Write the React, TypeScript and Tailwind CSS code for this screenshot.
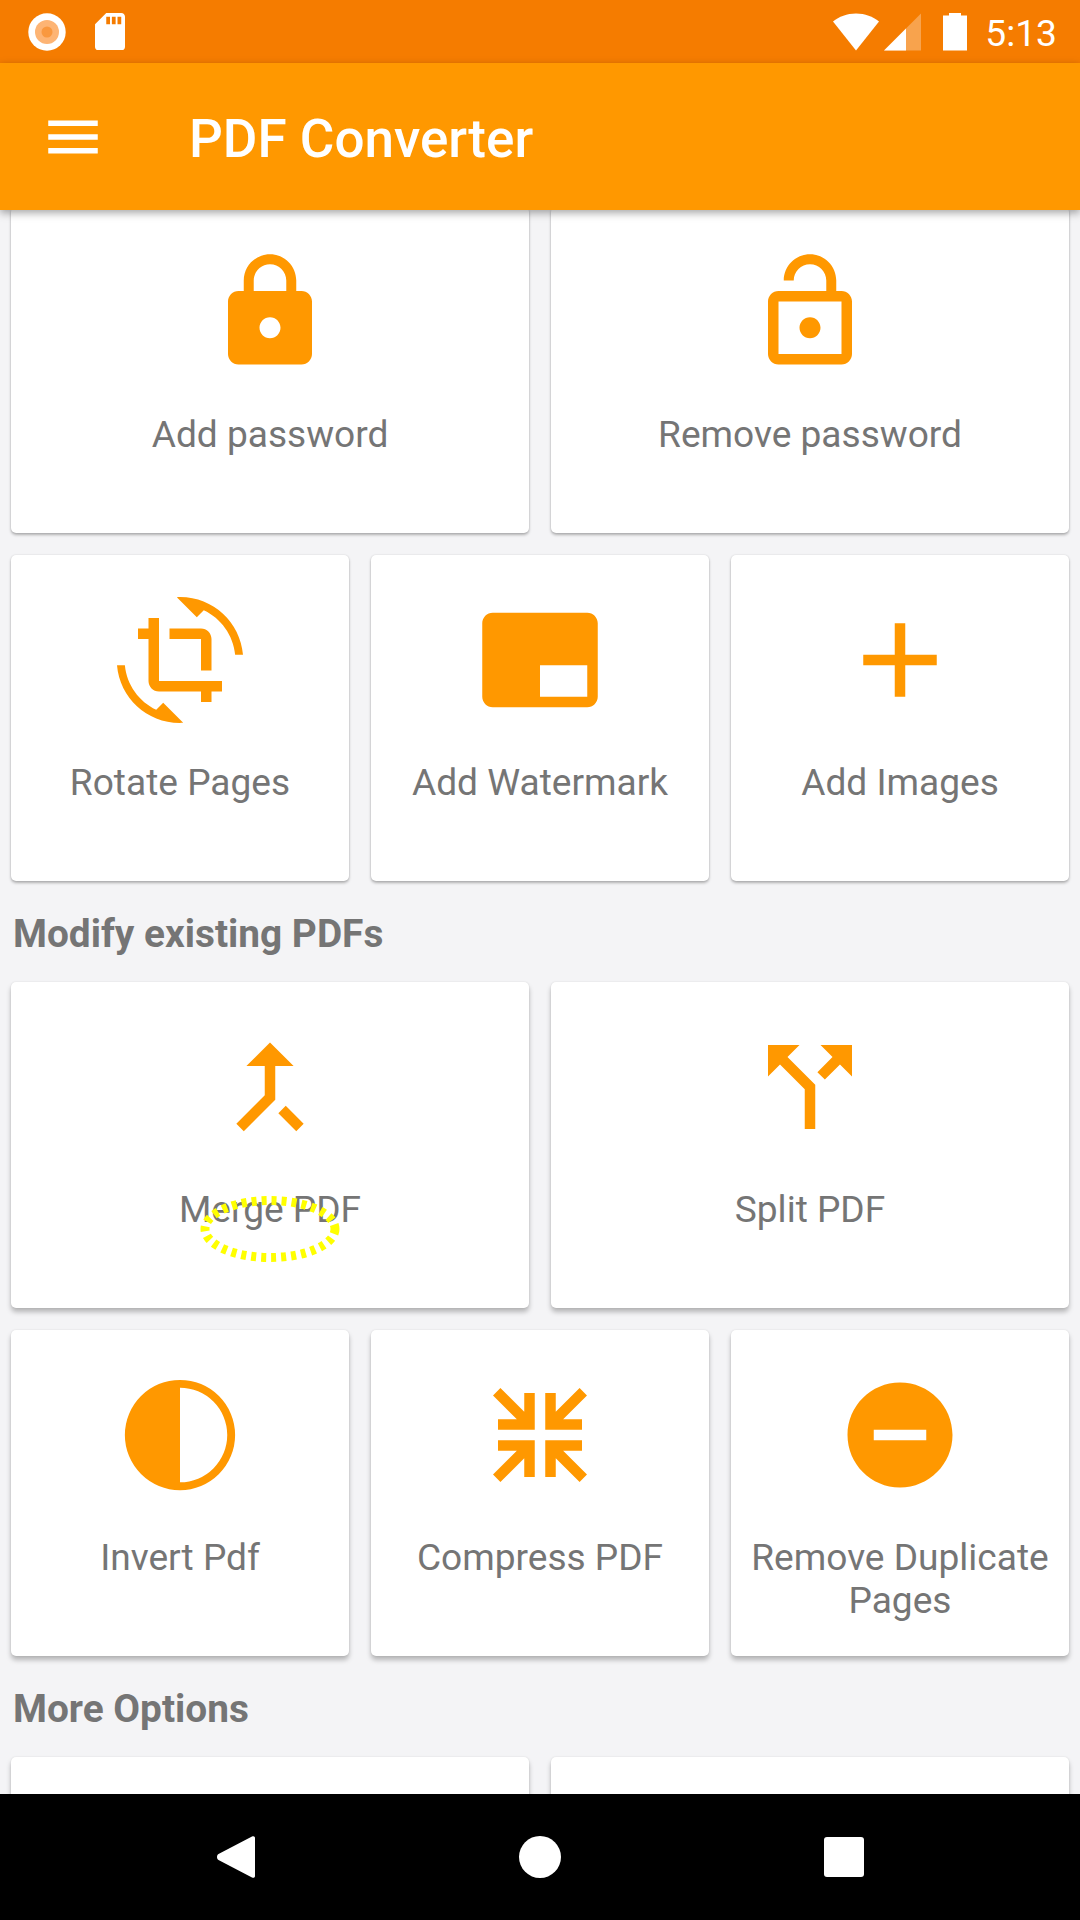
import type { ReactNode } from 'react';

const paths = {
    lock: 'M18 8h-1V6c0-2.76-2.24-5-5-5S7 3.24 7 6v2H6c-1.1 0-2 .9-2 2v10c0 1.1.9 2 2 2h12c1.1 0 2-.9 2-2V10c0-1.1-.9-2-2-2zm-6 9c-1.1 0-2-.9-2-2s.9-2 2-2 2 .9 2 2-.9 2-2 2zm3.1-9H8.9V6c0-1.71 1.39-3.1 3.1-3.1 1.71 0 3.1 1.39 3.1 3.1v2z',
    lockOpen: 'M12 17c1.1 0 2-.9 2-2s-.9-2-2-2-2 .9-2 2 .9 2 2 2zm6-9h-1V6c0-2.76-2.24-5-5-5S7 3.24 7 6h1.9c0-1.71 1.39-3.1 3.1-3.1 1.71 0 3.1 1.39 3.1 3.1v2H6c-1.1 0-2 .9-2 2v10c0 1.1.9 2 2 2h12c1.1 0 2-.9 2-2V10c0-1.1-.9-2-2-2zm0 12H6V10h12v10z',
    rotate: 'M7.47 21.49C4.2 19.93 1.86 16.76 1.5 13H0c.51 6.16 5.66 11 11.95 11 .23 0 .44-.02.66-.03L8.8 20.15l-1.33 1.34zM12.05 0c-.23 0-.44.02-.66.04l3.81 3.81 1.33-1.33C19.8 4.07 22.14 7.24 22.5 11H24c-.51-6.16-5.66-11-11.95-11zM16 14h2V8c0-1.11-.9-2-2-2h-6v2h6v6zm-8 2V4H6v2H4v2h2v8c0 1.1.89 2 2 2h8v2h2v-2h2v-2H8z',
    watermark: 'M21 3H3c-1.1 0-2 .9-2 2v14c0 1.1.9 2 2 2h18c1.1 0 2-.9 2-2V5c0-1.1-.9-2-2-2zM12 13h9v6h-9z',
    add: 'M19 13h-6v6h-2v-6H5v-2h6V5h2v6h6v2z',
    merge: 'M17 20.41L18.41 19 15 15.59 13.59 17 17 20.41zM7.5 8H11v5.59L5.59 19 7 20.41l6-6V8h3.5L12 3.5 7.5 8z',
    split: 'M14 4l2.29 2.29-2.88 2.88 1.42 1.42 2.88-2.88L20 10V4zm-4 0H4v6l2.29-2.29 4.71 4.7V20h2v-8.41l-5.29-5.3z',
    invert: 'M12 1.5a10.5 10.5 0 1 0 0 21 10.5 10.5 0 0 0 0-21zM12 3v18a9 9 0 0 0 0-18z',
    compress: 'M11 11H4V9h3.59L3.05 4.46l1.41-1.41L9 7.59V4h2zM13 11h7V9h-3.59l4.54-4.54-1.41-1.41L15 7.59V4h-2zM11 13H4v2h3.59l-4.54 4.54 1.41 1.41L9 16.41V20h2zM13 13h7v2h-3.59l4.54 4.54-1.41 1.41L15 16.41V20h-2z',
    minus: 'M12 2C6.48 2 2 6.48 2 12s4.48 10 10 10 10-4.48 10-10S17.52 2 12 2zm5 11H7v-2h10v2z',
};

const Card = ({ icon, label, low, children }: { icon?: string; label?: string; low?: boolean; children?: ReactNode }) => (
    <div
        className={`relative h-[326px] rounded-[5px] bg-white px-[10px] pt-[42px] text-center ${
            low
                ? 'shadow-[0_4px_5px_rgba(0,0,0,0.26),0_0_2px_rgba(0,0,0,0.1)]'
                : 'shadow-[0_2px_3px_rgba(0,0,0,0.28),0_0_2px_rgba(0,0,0,0.12)]'
        }`}
    >
        {icon && (
            <svg viewBox="0 0 24 24" className="mx-auto h-[126px] w-[126px] fill-[#ff9800]">
                <path d={icon} fillRule="evenodd" />
            </svg>
        )}
        {label && <div className="mt-[38px] text-[37.1px] leading-[43px] text-[#757575]">{label}</div>}
        {children}
    </div>
);

const SectionTitle = ({ children }: { children: ReactNode }) => (
    <div className="pb-[27px] pl-[2px] pt-[31px] text-[38.8px] font-bold leading-[43px] text-[#757575]">{children}</div>
);

const StatusBar = () => (
    <div className="flex h-[63px] shrink-0 items-center justify-between bg-[#f57c00] pl-[28px] pr-[23px]">
        <div className="flex items-center gap-[29px]">
            <svg viewBox="0 0 38 38" className="h-[38px] w-[38px]">
                <circle cx="19" cy="19" r="18.7" fill="#fff" />
                <circle cx="19" cy="19" r="12" fill="#fdb474" />
                <circle cx="19" cy="19" r="5.5" fill="#f9983f" />
            </svg>
            <svg viewBox="4 2 16 20" className="h-[37.5px] w-[30px] fill-white">
                <path d="M18 2h-8L4.02 8 4 20c0 1.1.9 2 2 2h12c1.1 0 2-.9 2-2V4c0-1.1-.9-2-2-2zm-6 6h-2V4h2v4zm3 0h-2V4h2v4zm3 0h-2V4h2v4z" />
            </svg>
        </div>
        <div className="flex items-center">
            <svg viewBox="0 0 134 38" className="h-[38px] w-[134px]">
                <path d="M0 8.5C6 3.5 14 0.500 23 0.500S40 3.500 46 8.500L23 37.500Z" fill="#fff" />
                <path d="M51 37.500L88 0.500V37.500Z" fill="#fff" fillOpacity="0.3" />
                <path d="M51 37.500L73 15.500V37.500Z" fill="#fff" />
                <path d="M110 37.500V2.500H116V0H128V2.500H134V37.500Z" fill="#fff" />
            </svg>
            <span className="ml-[18px] mt-[3px] text-[37.2px] leading-[43px] text-white">5:13</span>
        </div>
    </div>
);

const Toolbar = () => (
    <div className="relative z-10 flex h-[147px] shrink-0 items-center bg-[#ff9800] pl-[40px] shadow-[0_3px_8px_rgba(0,0,0,0.35)]">
        <svg viewBox="0 0 24 24" className="h-[66px] w-[66px] fill-white">
            <path d="M3 18h18v-2H3v2zm0-5h18v-2H3v2zm0-5h18V6H3v2z" />
        </svg>
        <span className="ml-[83px] mt-[4px] text-[53px] font-medium leading-[62px] text-white">PDF Converter</span>
    </div>
);

const NavBar = () => (
    <div className="relative z-10 flex h-[126px] shrink-0 items-center justify-center bg-black">
        <div className="flex w-[304px] justify-center">
            <svg viewBox="0 0 38 42" className="h-[42px] w-[38px] fill-white">
                <path d="M35 .6C36.500 -.4 38 .3 38 2V40C38 41.700 36.500 42.400 35 41.400L1.500 24C-.5 22.800 -.5 19.200 1.500 18Z" />
            </svg>
        </div>
        <div className="flex w-[304px] justify-center">
            <div className="h-[42px] w-[42px] rounded-full bg-white" />
        </div>
        <div className="flex w-[304px] justify-center">
            <div className="h-[40px] w-[40px] rounded-[3px] bg-white" />
        </div>
    </div>
);

export default function App() {
    return (
        <div className="flex h-[1920px] w-[1080px] flex-col overflow-hidden bg-[#f4f4f6] font-['Roboto',sans-serif]">
            <StatusBar />
            <Toolbar />
            <div className="min-h-0 flex-1 overflow-hidden">
                <div className="-mt-[3px] px-[11px]">
                    <div className="grid grid-cols-2 gap-[22px]">
                        <Card icon={paths.lock} label="Add password" />
                        <Card icon={paths.lockOpen} label="Remove password" />
                    </div>
                    <div className="mt-[22px] grid grid-cols-3 gap-[22px]">
                        <Card icon={paths.rotate} label="Rotate Pages" />
                        <Card icon={paths.watermark} label="Add Watermark" />
                        <Card icon={paths.add} label="Add Images" />
                    </div>
                    <SectionTitle>Modify existing PDFs</SectionTitle>
                    <div className="grid grid-cols-2 gap-[22px]">
                        <Card low icon={paths.merge} label="Merge PDF">
                            {/* touch indicator from the screen recorder */}
                            <svg viewBox="0 0 140 70" className="absolute left-[189px] top-[212px] h-[70px] w-[140px]">
                                <ellipse cx="70" cy="35" rx="65" ry="28.5" fill="none" stroke="#ffff00" strokeWidth="9" strokeDasharray="5 5" />
                            </svg>
                        </Card>
                        <Card low icon={paths.split} label="Split PDF" />
                    </div>
                    <div className="mt-[22px] grid grid-cols-3 gap-[22px]">
                        <Card low icon={paths.invert} label="Invert Pdf" />
                        <Card low icon={paths.compress} label="Compress PDF" />
                        <Card low icon={paths.minus} label="Remove Duplicate Pages" />
                    </div>
                    <SectionTitle>More Options</SectionTitle>
                    <div className="grid grid-cols-2 gap-[22px]">
                        <Card low />
                        <Card low />
                    </div>
                </div>
            </div>
            <NavBar />
        </div>
    );
}
